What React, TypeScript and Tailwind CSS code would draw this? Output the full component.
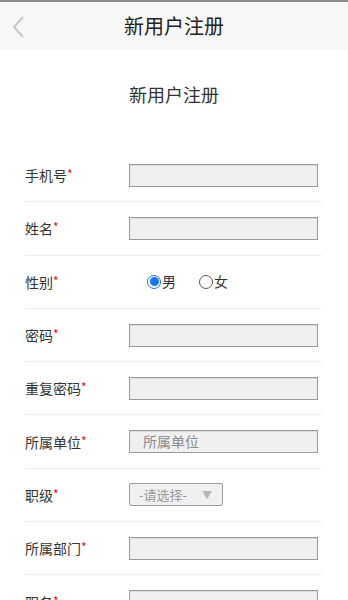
import React from "react";

const font = { fontFamily: '"Noto Sans CJK SC", "Noto Sans", sans-serif' };

function Label({ text }: { text: string }) {
    return (
        <div className="w-[104px] shrink-0 text-[14px] text-[#333] leading-none">
            {text}
            <span className="text-[#d11] text-[12px] align-top">*</span>
        </div>
    );
}

function TextBox({ placeholder }: { placeholder?: string }) {
    return (
        <div className="w-[189px] h-[23px] border border-[#9a9a9a] bg-[#f0f0f0] shadow-[inset_0_1px_1px_rgba(0,0,0,0.08)] flex items-center pl-[13px] text-[14px] text-[#8a8a8a]">
            {placeholder}
        </div>
    );
}

function Row({ label, children }: { label: string; children: React.ReactNode }) {
    return (
        <div className="h-[53.3px] border-b border-[#eeeeee] flex items-center">
            <Label text={label} />
            {children}
        </div>
    );
}

export default function App() {
    return (
        <div className="w-[348px] h-[600px] overflow-hidden bg-white" style={font}>
            {/* header */}
            <div className="border-t-2 border-[#8c8c8c] h-[50px] bg-[#f7f7f7] relative flex items-center justify-center">
                <svg className="absolute left-[11px] top-[13px]" width="14" height="24" viewBox="0 0 14 24">
                    <path d="M12 2 L3 12 L12 22" fill="none" stroke="#c8c8c8" strokeWidth="2" />
                </svg>
                <div className="text-[20px] text-[#222] leading-none -mt-[1px]">新用户注册</div>
            </div>

            <div className="h-[100px] pt-[32px] text-center text-[18px] leading-[24px] text-[#333]">新用户注册</div>

            <div className="ml-[25px] w-[297px] -mt-[1px]">
                <Row label="手机号"><TextBox /></Row>
                <Row label="姓名"><TextBox /></Row>
                <Row label="性别">
                    <div className="flex items-center ml-[18px] text-[14px] text-[#333]">
                        <span className="w-[14px] h-[14px] rounded-full border-[1.5px] border-[#1a73e8] flex items-center justify-center">
                            <span className="w-[9px] h-[9px] rounded-full bg-[#1a73e8]" />
                        </span>
                        <span className="ml-[1px]">男</span>
                        <span className="ml-[23px] w-[14px] h-[14px] rounded-full border border-[#555]" />
                        <span className="ml-[1px]">女</span>
                    </div>
                </Row>
                <Row label="密码"><TextBox /></Row>
                <Row label="重复密码"><TextBox /></Row>
                <Row label="所属单位"><TextBox placeholder="所属单位" /></Row>
                <Row label="职级">
                    <div className="w-[94px] h-[23px] border border-[#9a9a9a] rounded-[2px] bg-[#f0f0f0] flex items-center justify-between pl-[9px] pr-[10px] text-[13px] text-[#999]">
                        <span>-请选择-</span>
                        <span className="text-[10px] text-[#b5b5b5]">▼</span>
                    </div>
                </Row>
                <Row label="所属部门"><TextBox /></Row>
                <Row label="职务"><TextBox /></Row>
            </div>
        </div>
    );
}
